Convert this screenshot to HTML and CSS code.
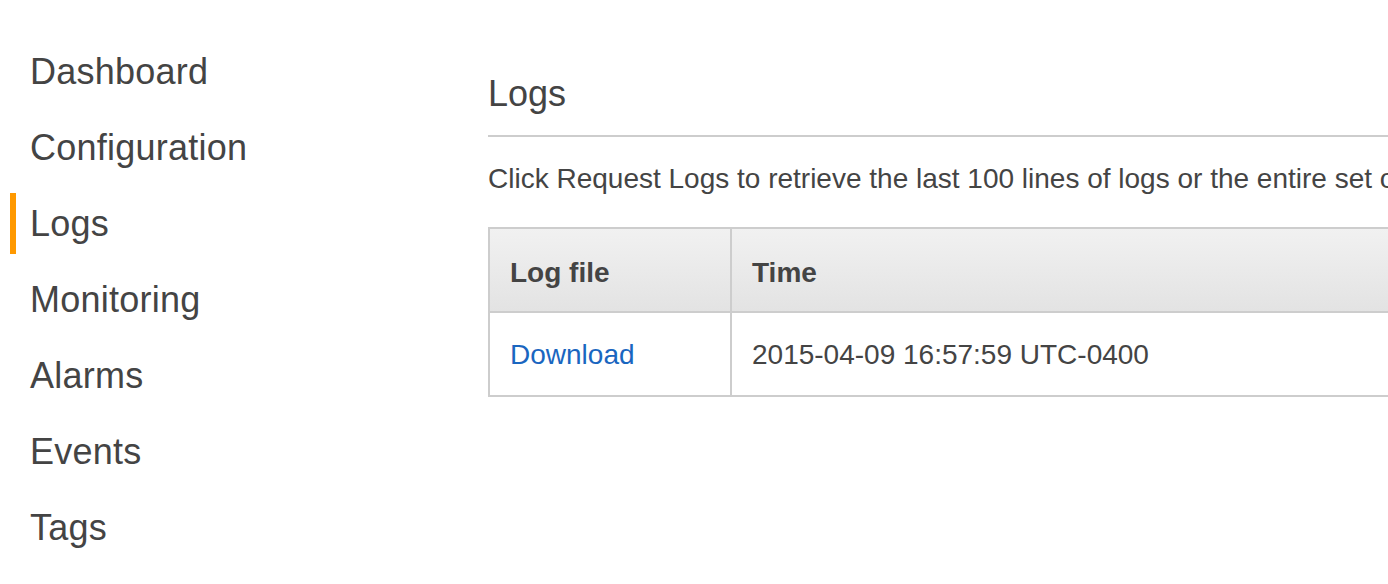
FILE: index.html
```html
<!DOCTYPE html>
<html lang="en">
<head>
<meta charset="utf-8">
<title>Logs</title>
<link rel="stylesheet" href="styles.css">
</head>
<body>
<div class="page">
  <nav class="sidebar">
    <a class="nav-item">Dashboard</a>
    <a class="nav-item">Configuration</a>
    <a class="nav-item active">Logs</a>
    <a class="nav-item">Monitoring</a>
    <a class="nav-item">Alarms</a>
    <a class="nav-item">Events</a>
    <a class="nav-item">Tags</a>
  </nav>
  <main class="content">
    <h2 class="title">Logs</h2>
    <hr class="rule">
    <p class="intro">Click Request Logs to retrieve the last 100 lines of logs or the entire set of logs from each EC2 instance.</p>
    <table class="logs">
      <thead>
        <tr><th class="col-file">Log file</th><th class="col-time">Time</th></tr>
      </thead>
      <tbody>
        <tr><td class="col-file"><a class="link" href="#">Download</a></td><td class="col-time">2015-04-09 16:57:59 UTC-0400</td></tr>
      </tbody>
    </table>
  </main>
</div>
</body>
</html>
```

FILE: styles.css
```css
html, body {
  margin: 0;
  padding: 0;
  background: #fff;
  overflow: hidden;
}
body {
  font-family: "Liberation Sans", Arial, Helvetica, sans-serif;
  color: #444;
  width: 1388px;
  height: 584px;
}
.page {
  display: flex;
  width: 1900px;
}
.sidebar {
  width: 487px;
  flex: none;
  display: flex;
  flex-direction: column;
  gap: 15px;
  padding-top: 41px;
  box-sizing: border-box;
}
.nav-item {
  display: block;
  margin-left: 10px;
  border-left: 6px solid transparent;
  padding-left: 14px;
  font-size: 36px;
  line-height: 61px;
  height: 61px;
  letter-spacing: 0.25px;
  color: #444;
  cursor: pointer;
}
.nav-item.active {
  border-left-color: #ff9900;
}
.content {
  flex: none;
  width: 1400px;
  padding-top: 72px;
}
.title {
  margin: 0;
  font-size: 36px;
  font-weight: normal;
  line-height: 44px;
  padding-left: 1px;
}
.rule {
  margin: 19px 0 0 1px;
  border: 0;
  border-top: 2px solid #cdcdcd;
  height: 0;
}
.intro {
  margin: 25px 0 0 1px;
  font-size: 28px;
  line-height: 34px;
  white-space: nowrap;
}
.logs {
  margin: 31px 0 0 1px;
  border-collapse: separate;
  border-spacing: 0;
  border-top: 2px solid #cdcdcd;
  border-left: 2px solid #cdcdcd;
  width: 1300px;
  font-size: 28px;
}
.logs th, .logs td {
  text-align: left;
  border-right: 2px solid #cdcdcd;
  border-bottom: 2px solid #cdcdcd;
  line-height: 40px;
}
.logs th {
  padding: 24px 20px 18px;
  font-weight: bold;
  background: linear-gradient(#f1f1f1, #e3e3e3);
  color: #444;
}
.logs td {
  padding: 22px 20px 20px;
}
.col-file {
  width: 200px;
}
.link {
  color: #1a66c0;
  text-decoration: none;
}
```
